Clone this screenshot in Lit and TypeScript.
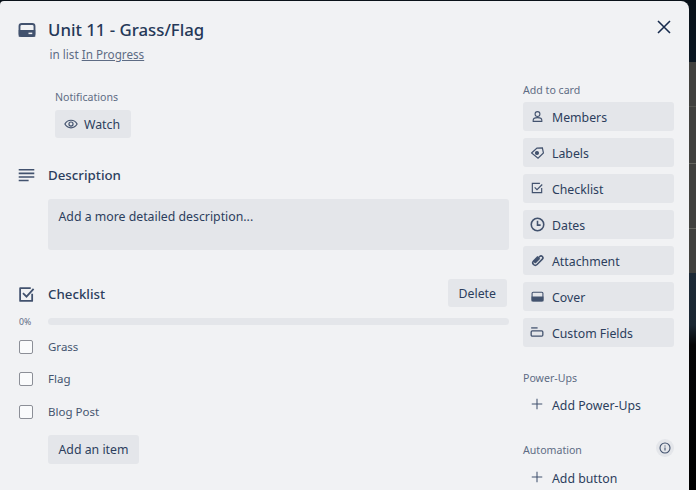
import { LitElement, html, css, svg } from "lit";
import { customElement } from "lit/decorators.js";

const ic = (body: unknown, size = 14, vb = 24) => html`<svg width=${size} height=${size} viewBox="0 0 ${vb} ${vb}" fill="none" stroke="#42526e" stroke-width="2">${body}</svg>`;

const sideItems: [string, unknown][] = [
  ["Members", ic(svg`<circle cx="12" cy="7.500" r="4.500"/><path d="M4 21v-2c0-3 3-5 8-5s8 2 8 5v2z"/>`, 13)],
  ["Labels", ic(svg`<path d="M1 13 11 4 21 3.500 23 13 13 22.500z" stroke-width="2.200"/><circle cx="11" cy="13" r="2.800" fill="#42526e"/>`, 13)],
  ["Checklist", ic(svg`<path d="M20 12v8H4V4h13"/><path d="M8 11l4 4 9-9"/>`, 14)],
  ["Dates", ic(svg`<circle cx="12" cy="12" r="10" stroke-width="2.500"/><path d="M12 6v7h5" stroke-width="2.500"/>`, 15)],
  ["Attachment", ic(svg`<path d="M8 7v10a4 4 0 0 0 8 0V5a3 3 0 0 0-6 0v11a1 1 0 0 0 2 0V7" stroke-width="2.500" transform="rotate(45 12 12)"/>`, 15)],
  ["Cover", ic(svg`<rect x="2" y="4" width="20" height="16" rx="2"/><rect x="2" y="13" width="20" height="7" fill="#42526e"/>`, 13)],
  ["Custom Fields", ic(svg`<rect x="2" y="10" width="20" height="9" rx="2" stroke-width="2.200"/><path d="M2 5h11" stroke-width="2.200"/>`, 14)],
];

const plus = ic(svg`<path d="M12 3v18M3 12h18" stroke-width="1.800"/>`);

@customElement("app-root")
export class AppRoot extends LitElement {
  static styles = css`
    :host { display: block; width: 696px; height: 490px; overflow: hidden; font-family: "Noto Sans", sans-serif; color: #2c3e5d; }
    * { box-sizing: border-box; }
    .backdrop {
      display: flex; width: 696px; height: 490px; overflow: hidden;
      background:
        linear-gradient(transparent 106px, #55554f 106px, #55554f 107px, transparent 107px, transparent 163px, #66665f 163px, #66665f 164px, transparent 164px, transparent 228px, #66665f 228px, #66665f 229px, transparent 229px),
        linear-gradient(#0a1219 0, #0a1621 62px, #41413e 62px, #41413e 273px, #1d2a36 273px, #1a2631 325px, #050506 345px, #000 100%);
    }
    .window { width: 689px; flex: none; height: 520px; background: #f1f2f4; border-radius: 4px 8px 0 0; margin-top: 1px; display: grid; grid-template-columns: 523px 151px 15px; }
    .main { padding: 0 0 0 18px; display: flex; flex-direction: column; }
    .title-row { display: flex; align-items: center; height: 26px; margin-top: 16px; }
    .icon-col { width: 30px; flex: none; display: flex; align-items: center; }
    h1 { margin: 0; font-size: 16.800px; font-weight: 500; line-height: 26px; color: #253858; }
    .sub { margin: 2px 0 0 31.500px; font-size: 11.700px; line-height: 18px; color: #5e6c84; }
    .sub u { color: #5e6c84; }
    .notif { margin: 26px 0 0 37px; }
    .lbl { font-size: 10.600px; line-height: 16px; color: #5e6c84; }
    .btn { display: inline-flex; align-items: center; height: 28px; border-radius: 3px; background: #e4e6ea; font-size: 12.300px; color: #2c3e5d; }
    .watch { margin-top: 5px; padding: 0 11px 0 9px; gap: 6px; }
    .head { font-size: 13.300px; font-weight: 500; line-height: 20px; color: #2c3e5d; }
    .desc-row { display: flex; align-items: center; margin-top: 27px; }
    .desc { margin: 14px 0 0 30px; width: 461px; height: 51px; background: #e4e6ea; border-radius: 3px; padding: 9px 10.500px; font-size: 12.300px; line-height: 18px; }
    .check-row { display: flex; align-items: center; margin-top: 29px; height: 28px; width: 489px; justify-content: space-between; }
    .left { display: flex; align-items: center; padding-top: 2px; }
    .del { padding: 0 11px; }
    .prog { display: flex; align-items: center; margin-top: 7px; height: 14px; }
    .pct { width: 30px; font-size: 8.700px; line-height: 14px; color: #5e6c84; margin-left: 1px; margin-right: -1px; padding-top: 2px; }
    .bar { width: 461px; height: 7px; border-radius: 4px; background: #e4e6ea; }
    .items { margin-top: 10px; display: flex; flex-direction: column; gap: 14.300px; }
    .item { display: flex; align-items: center; height: 18px; font-size: 11.500px; line-height: 18px; color: #44546f; }
    .box { width: 14px; height: 14px; margin: 0 15px 0 1px; border: 1.500px solid #8c8f97; border-radius: 2px; background: #fafbfc; }
    .add { margin: 14px 0 0 30px; height: 29px; padding: 0 11px 0 10.500px; align-self: flex-start; }
    .side { display: flex; flex-direction: column; }
    .side .first { margin-top: 81px; }
    .actions { display: flex; flex-direction: column; gap: 7px; margin-top: 4px; }
    .act { height: 29px; display: flex; align-items: center; background: #e4e6ea; border-radius: 3px; font-size: 12.300px; color: #2c3e5d; padding-top: 1px; }
    .ai { width: 29px; flex: none; display: flex; align-items: center; justify-content: center; padding-right: 1px; margin-top: -2px; }
    .plain { height: 29px; display: flex; align-items: center; font-size: 12.300px; color: #2c3e5d; margin-top: 4px; padding-top: 1px; }
    .sec { margin-top: 23px; }
    .auto { display: flex; justify-content: space-between; align-items: center; margin-top: 22px; height: 18px; }
    .info { width: 18px; height: 18px; border-radius: 50%; background: #e4e6ea; display: flex; align-items: center; justify-content: center; align-self: flex-start; margin-top: -2px; }
    .plain.last { margin-top: 4px; }
    .close { display: flex; position: absolute; left: 655px; top: 18px; }
  `;

  render() {
    return html`<div class="backdrop"><div class="window">
      <div class="main">
        <div class="title-row">
          <div class="icon-col">${ic(svg`<rect x="2" y="4" width="20" height="16" rx="3" stroke-width="2.500"/><rect x="2" y="13" width="20" height="7" fill="#42526e"/><rect x="14" y="15.500" width="5" height="2" fill="#f1f2f4" stroke="none"/>`, 18)}</div>
          <h1>Unit 11 - Grass/Flag</h1>
        </div>
        <div class="sub">in list <u>In Progress</u></div>
        <div class="notif">
          <div class="lbl">Notifications</div>
          <div class="btn watch">${ic(svg`<path d="M1.500 12C4 7.500 8 5.500 12 5.500s8 2 10.500 6.500C20 16.500 16 18.500 12 18.500S4 16.500 1.500 12z"/><circle cx="12" cy="12" r="3.500"/>`)}Watch</div>
        </div>
        <div class="desc-row">
          <div class="icon-col">${ic(svg`<path d="M1 4h22M1 9h22M1 14h22M1 19h14" stroke-width="2.200"/>`, 17)}</div>
          <div class="head">Description</div>
        </div>
        <div class="desc">Add a more detailed description...</div>
        <div class="check-row">
          <div class="left">
            <div class="icon-col">${ic(svg`<path d="M20 11v10H3V3h15" stroke-width="2.500" stroke-linejoin="round"/><path d="M7 10l5 5 10-11" stroke-width="2.500"/>`, 17)}</div>
            <div class="head">Checklist</div>
          </div>
          <div class="btn del">Delete</div>
        </div>
        <div class="prog"><div class="pct">0%</div><div class="bar"></div></div>
        <div class="items">
          ${["Grass", "Flag", "Blog Post"].map((t) => html`<div class="item"><div class="box"></div>${t}</div>`)}
        </div>
        <div class="btn add">Add an item</div>
      </div>
      <div class="side">
        <div class="lbl first">Add to card</div>
        <div class="actions">
          ${sideItems.map(([t, i]) => html`<div class="act"><span class="ai">${i}</span>${t}</div>`)}
        </div>
        <div class="lbl sec">Power-Ups</div>
        <div class="plain"><span class="ai">${plus}</span>Add Power-Ups</div>
        <div class="auto lbl"><span>Automation</span><span class="info">${ic(svg`<circle cx="12" cy="12" r="10" stroke-width="2.200"/><path d="M12 11v6M12 7v2" stroke-width="2.200"/>`, 12)}</span></div>
        <div class="plain last"><span class="ai">${plus}</span>Add button</div>
      </div>
      <div></div>
      <div class="close">${ic(svg`<path d="M4 4l16 16M20 4 4 20" stroke="#172b4d" stroke-width="2.100"/>`, 18)}</div>
    </div></div>`;
  }
}
